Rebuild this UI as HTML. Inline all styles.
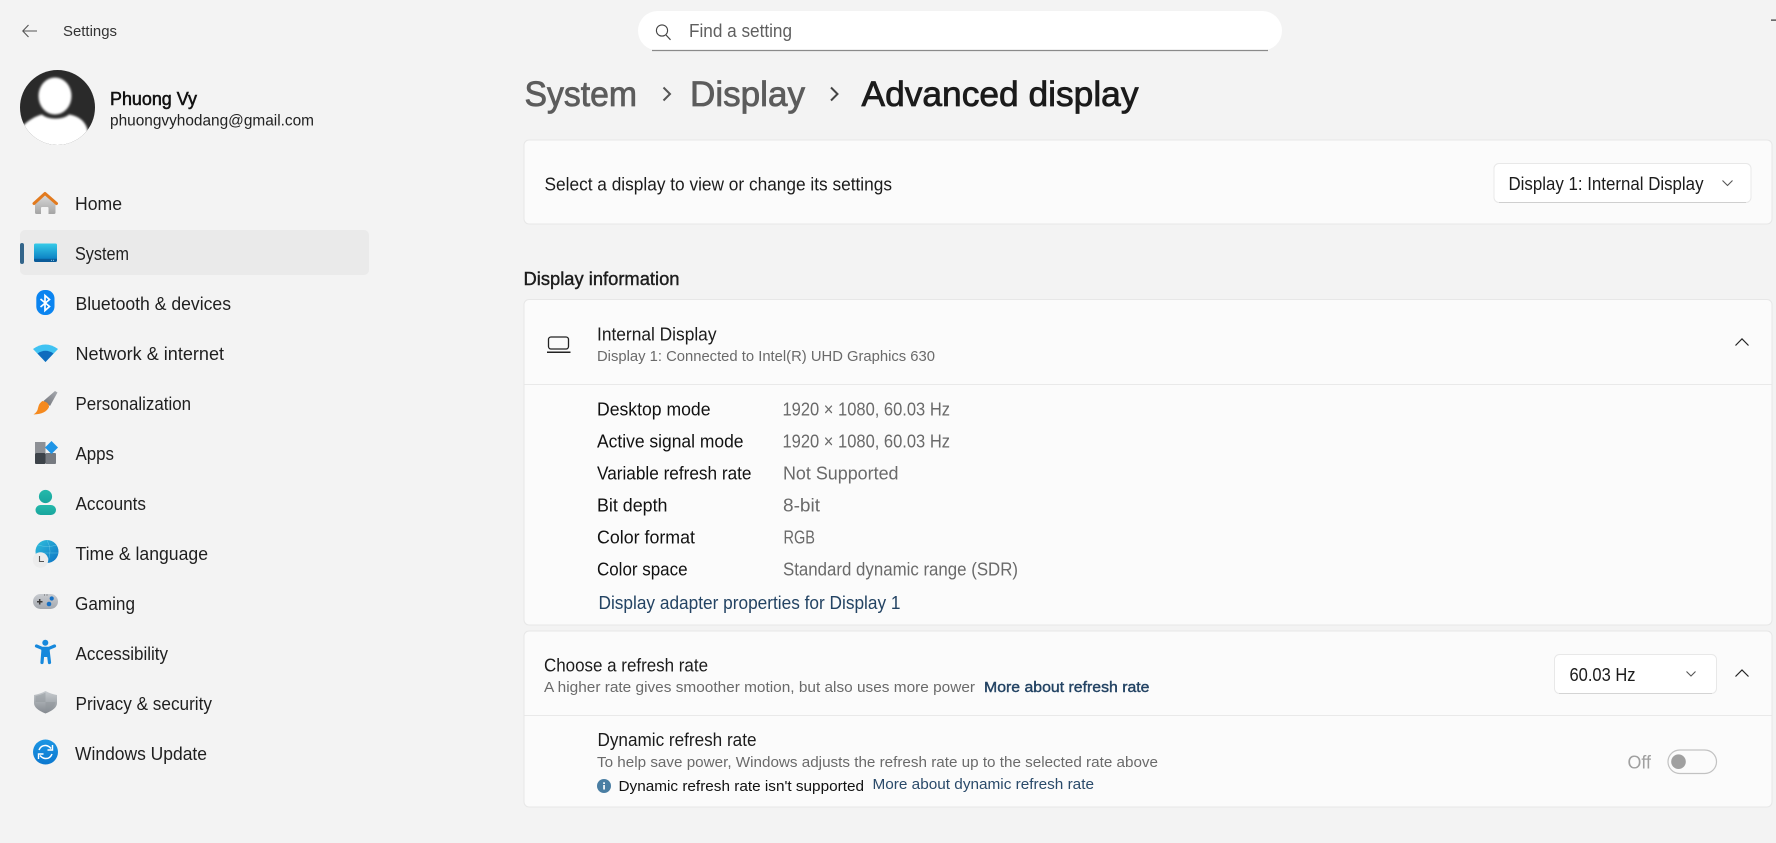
<!DOCTYPE html>
<html lang="en"><head><meta charset="utf-8"><title>Settings</title>
<style>
html,body{margin:0;padding:0;background:#f3f3f3;width:1776px;height:843px;overflow:hidden}
svg{display:block}
text{font-family:"Liberation Sans",sans-serif;fill:#1c1c1c;font-size:18px}
.g{fill:#6a6a6a}
.sb{stroke:currentColor;stroke-width:.4px}
.bc{stroke:currentColor;stroke-width:.8px;font-size:35.5px}
.l{fill:#234363}
.n{font-size:18px;fill:#1f1f1f}
.m{font-size:18px}
.s{font-size:15px}
</style></head><body>
<svg xmlns="http://www.w3.org/2000/svg" width="1776" height="843" viewBox="0 0 1776 843">
<defs>
<linearGradient id="sys" x1="0" y1="0" x2="0" y2="1"><stop offset="0" stop-color="#36cbe8"/><stop offset=".82" stop-color="#0d83c4"/><stop offset=".83" stop-color="#0a5f9c"/><stop offset="1" stop-color="#0a5a98"/></linearGradient>
<linearGradient id="house" x1="0" y1="0" x2="0" y2="1"><stop offset="0" stop-color="#dcdcdc"/><stop offset="1" stop-color="#a4a4a4"/></linearGradient>
<linearGradient id="shield" x1="0" y1="0" x2="0" y2="1"><stop offset="0" stop-color="#c8ccd0"/><stop offset="1" stop-color="#84898f"/></linearGradient>
<linearGradient id="upd" x1="0" y1="0" x2="0" y2="1"><stop offset="0" stop-color="#1c96e4"/><stop offset="1" stop-color="#0c78cf"/></linearGradient>
<linearGradient id="pad" x1="0" y1="0" x2="0" y2="1"><stop offset="0" stop-color="#c8cbd0"/><stop offset="1" stop-color="#a4a8ae"/></linearGradient>
<linearGradient id="teal" x1="0" y1="0" x2="0" y2="1"><stop offset="0" stop-color="#25b9ab"/><stop offset="1" stop-color="#18a59d"/></linearGradient>
<linearGradient id="globe" x1="0" y1="0" x2="1" y2="1"><stop offset="0" stop-color="#30c0dc"/><stop offset="1" stop-color="#0c72c4"/></linearGradient>
<linearGradient id="brush" x1="1" y1="0" x2="0" y2="1"><stop offset="0" stop-color="#a8abb0"/><stop offset="1" stop-color="#6f7278"/></linearGradient>
<clipPath id="av"><circle cx="57.5" cy="107.5" r="37.5"/></clipPath>
<filter id="bl"><feGaussianBlur stdDeviation="1.1"/></filter>
</defs>

<rect width="1776" height="843" fill="#f3f3f3"/>

<!-- title bar -->
<path d="M23 31H37M28.5 25 22.8 31l5.7 6" fill="none" stroke="#555" stroke-width="1.1"/>
<text x="63" y="36" textLength="54" lengthAdjust="spacingAndGlyphs" style="font-size:15px;fill:#333">Settings</text>
<rect x="1771" y="19.5" width="5" height="1.2" fill="#333"/>

<!-- search -->
<rect x="638" y="11" width="644" height="39.5" rx="19.7" fill="#fff"/>
<path d="M652 50.5H1268" stroke="#8a8a8a" stroke-width="1.2"/>
<circle cx="662" cy="30.5" r="5.6" fill="none" stroke="#444" stroke-width="1.1"/>
<path d="M666 35 670.5 39.8" stroke="#444" stroke-width="1.2"/>
<text x="689" y="37" textLength="103" lengthAdjust="spacingAndGlyphs" style="font-size:18px;fill:#5f5f5f">Find a setting</text>

<!-- profile -->
<circle cx="57.5" cy="107.5" r="37.5" fill="#2a2a2a"/>
<g clip-path="url(#av)"><g filter="url(#bl)" fill="#fff">
<ellipse cx="55" cy="96" rx="16.5" ry="18.5"/>
<path d="M22 150V127C28 120 36 116 42 114.500C48 120 63 120 69 114.500C78 116 84 120 87 128L92 150Z"/>
</g></g>
<text x="110" y="105" textLength="87" lengthAdjust="spacingAndGlyphs" class="sb" style="font-size:18px;fill:#111;color:#111;stroke-width:.55px">Phuong Vy</text>
<text x="110" y="125.500" textLength="204" lengthAdjust="spacingAndGlyphs" style="font-size:15.5px;fill:#222">phuongvyhodang@gmail.com</text>

<!-- nav selection -->
<rect x="20" y="230" width="349" height="45" rx="5" fill="#eaeaea"/>
<rect x="20" y="243" width="4" height="21" rx="2" fill="#33658a"/>

<!-- nav text -->
<text class="n" x="75" y="210" textLength="47" lengthAdjust="spacingAndGlyphs">Home</text>
<text class="n" x="75" y="260" textLength="54" lengthAdjust="spacingAndGlyphs">System</text>
<text class="n" x="75.500" y="310" textLength="155.500" lengthAdjust="spacingAndGlyphs">Bluetooth &amp; devices</text>
<text class="n" x="75.500" y="360" textLength="148.500" lengthAdjust="spacingAndGlyphs">Network &amp; internet</text>
<text class="n" x="75.500" y="410" textLength="115.500" lengthAdjust="spacingAndGlyphs">Personalization</text>
<text class="n" x="75.500" y="460" textLength="38.500" lengthAdjust="spacingAndGlyphs">Apps</text>
<text class="n" x="75.500" y="510" textLength="70.500" lengthAdjust="spacingAndGlyphs">Accounts</text>
<text class="n" x="75.500" y="560" textLength="132.500" lengthAdjust="spacingAndGlyphs">Time &amp; language</text>
<text class="n" x="75" y="610" textLength="60" lengthAdjust="spacingAndGlyphs">Gaming</text>
<text class="n" x="75.500" y="660" textLength="92.500" lengthAdjust="spacingAndGlyphs">Accessibility</text>
<text class="n" x="75.500" y="710" textLength="136.500" lengthAdjust="spacingAndGlyphs">Privacy &amp; security</text>
<text class="n" x="75" y="760" textLength="132" lengthAdjust="spacingAndGlyphs">Windows Update</text>

<!-- nav icons -->
<!-- home -->
<path d="M35 203 45 194 55.500 203V212.500a1.500 1.500 0 0 1-1.500 1.500H48.500V208a1 1 0 0 0-1-1H42a1 1 0 0 0-1 1V214H36.500a1.500 1.500 0 0 1-1.500-1.500Z" fill="url(#house)"/>
<path d="M34 203.500 45 193.500 56.500 203.500" fill="none" stroke="#e27a1e" stroke-width="3" stroke-linejoin="round" stroke-linecap="round"/>
<!-- system -->
<rect x="34" y="243.500" width="23" height="18.500" rx="1.500" fill="url(#sys)"/>
<path d="M51 260.300h1M53 260.300h1" stroke="#9fd6ef" stroke-width=".8"/>
<!-- bluetooth -->
<rect x="36.3" y="290" width="18.2" height="25" rx="8.5" fill="#0a84f0"/>
<path d="M40.500 299 49.500 306.500 45 310.500V295.500L49.500 299.500 40.500 307" fill="none" stroke="#fff" stroke-width="1.7"/>
<!-- wifi -->
<path d="M33 349Q45.500 340 58 349L45.500 362Z" fill="#3fc2f2"/>
<path d="M37.500 353.500Q45.500 348 53.500 353.500L45.500 362Z" fill="#0f6cbd"/>
<!-- brush -->
<path d="M43.500 401 55 391 57.500 392.500 50 406Z" fill="url(#brush)"/>
<path d="M42.500 401Q49 402 49 407 46 414 33.500 414.500 37.500 412 38 408 39 403 42.500 401Z" fill="#f58a1f"/>
<!-- apps -->
<rect x="35" y="442" width="10.5" height="11" fill="#8d9095"/>
<rect x="35" y="453" width="10.5" height="11" rx="1" fill="#3d4349"/>
<rect x="45.5" y="453" width="10.5" height="11" rx="1" fill="#767a80"/>
<path d="M51.500 441 58 447.500 51.500 454 45 447.500Z" fill="#1f95e6"/>
<!-- accounts -->
<circle cx="45.500" cy="496.500" r="6.600" fill="url(#teal)"/>
<rect x="35.500" y="505" width="20.500" height="10" rx="5" ry="5" fill="url(#teal)"/>
<!-- time -->
<circle cx="47" cy="551.500" r="11.500" fill="url(#globe)"/>
<path d="M38 545Q47 548 57 545M47 540Q53 551 47 563M36 553H58" fill="none" stroke="#8adcec" stroke-width=".5" opacity=".6"/>
<circle cx="40.500" cy="560" r="7.700" fill="#ececec"/>
<path d="M39.500 556V561.500H44" fill="none" stroke="#555" stroke-width="1.100"/>
<!-- gaming -->
<rect x="33" y="594" width="25" height="15" rx="7.500" fill="url(#pad)"/>
<path d="M39.700 599v5.500M37 601.700h5.500" stroke="#3a3a3a" stroke-width="1.500"/>
<circle cx="51.700" cy="598.500" r="2.100" fill="#1670c4"/><circle cx="49" cy="604" r="2.300" fill="#1670c4"/>
<path d="M44 595h1M46.500 595h1" stroke="#444" stroke-width=".8"/>
<!-- accessibility -->
<circle cx="45.300" cy="642.800" r="3" fill="#1688dc"/>
<path d="M36.500 646 42 648.300H49L54.500 646M43 650 42 662.500M48 650 49.500 662.500" fill="none" stroke="#1688dc" stroke-width="3.200" stroke-linecap="round" stroke-linejoin="round"/>
<path d="M41 648H50L48.500 657H42.500Z" fill="#1688dc"/>
<!-- shield -->
<path d="M45.500 691Q51 694 57 695V703Q57 709 45.500 713.500 34 709 34 703V695Q40 694 45.500 691Z" fill="url(#shield)"/>
<path d="M45.500 692.500V702H35.500V696Q41 695 45.500 692.500ZM45.500 702H55.500Q55 707 45.500 711.500Z" fill="#8f9499" opacity=".45"/>
<!-- update -->
<circle cx="45.500" cy="752" r="12.500" fill="url(#upd)"/>
<path d="M39 750Q41 745 46 745.500 49 746 51 748.500M52 754Q50 759 45 758.500 42 758 40 755.500" fill="none" stroke="#fff" stroke-width="1.500"/>
<path d="M52.500 745V750H47.500M38.500 759V754H43.500" fill="none" stroke="#fff" stroke-width="1.400"/>

<!-- breadcrumb -->
<text class="bc" x="524.500" y="106" textLength="112.500" lengthAdjust="spacingAndGlyphs" style="fill:#5c5c5c;color:#5c5c5c">System</text>
<text class="bc" x="690" y="106" textLength="115" lengthAdjust="spacingAndGlyphs" style="fill:#5c5c5c;color:#5c5c5c">Display</text>
<text class="bc" x="861.500" y="106" textLength="277" lengthAdjust="spacingAndGlyphs" style="fill:#1b1b1b;color:#1b1b1b">Advanced display</text>
<path d="M663.500 87.500 670 94 663.500 100.500" fill="none" stroke="#555" stroke-width="2"/>
<path d="M831 87.500 837.500 94 831 100.500" fill="none" stroke="#444" stroke-width="2"/>

<!-- card 1 -->
<rect x="524" y="140" width="1248" height="84" rx="5" fill="#fbfbfb" stroke="#e7e7e7"/>
<text class="m" x="544.500" y="190.500" textLength="347.500" lengthAdjust="spacingAndGlyphs">Select a display to view or change its settings</text>
<rect x="1494" y="163.500" width="257" height="39" rx="5" fill="#fff" stroke="#e8e8e8"/>
<path d="M1499 202.500H1746" stroke="#cfcfcf"/>
<text class="m" x="1508.500" y="190" textLength="195" lengthAdjust="spacingAndGlyphs">Display 1: Internal Display</text>
<path d="M1722.500 180.500 1727.500 185.500 1732.500 180.500" fill="none" stroke="#555" stroke-width="1.100"/>

<!-- section title -->
<text x="523.500" y="285" textLength="156" lengthAdjust="spacingAndGlyphs" class="sb" style="font-size:18px;color:#1c1c1c">Display information</text>

<!-- card 2 -->
<rect x="524" y="299.500" width="1248" height="325.500" rx="5" fill="#fbfbfb" stroke="#e7e7e7"/>
<path d="M524.500 384.500H1771.500" stroke="#e9e9e9"/>
<rect x="548.500" y="337" width="20" height="12" rx="2.500" fill="none" stroke="#222" stroke-width="1.300"/>
<path d="M547 352.300H570.500" stroke="#222" stroke-width="1.500"/>
<text class="m" x="597" y="340.500" textLength="119.500" lengthAdjust="spacingAndGlyphs">Internal Display</text>
<text class="g s" x="597" y="361" textLength="338" lengthAdjust="spacingAndGlyphs">Display 1: Connected to Intel(R) UHD Graphics 630</text>
<path d="M1735.500 345.500 1742 338.800 1748.500 345.500" fill="none" stroke="#222" stroke-width="1.200"/>

<g>
<text class="m" x="597" y="415.500" textLength="113.500" lengthAdjust="spacingAndGlyphs" style="fill:#111">Desktop mode</text>
<text class="m" x="597" y="447.500" textLength="146.500" lengthAdjust="spacingAndGlyphs" style="fill:#111">Active signal mode</text>
<text class="m" x="597" y="479.500" textLength="154.500" lengthAdjust="spacingAndGlyphs" style="fill:#111">Variable refresh rate</text>
<text class="m" x="597" y="511.500" textLength="70.500" lengthAdjust="spacingAndGlyphs" style="fill:#111">Bit depth</text>
<text class="m" x="597" y="543.500" textLength="98" lengthAdjust="spacingAndGlyphs" style="fill:#111">Color format</text>
<text class="m" x="597" y="575.500" textLength="90.500" lengthAdjust="spacingAndGlyphs" style="fill:#111">Color space</text>
</g>
<g>
<text class="g m" x="782.500" y="415.500" textLength="167.500" lengthAdjust="spacingAndGlyphs">1920 × 1080, 60.03 Hz</text>
<text class="g m" x="782.500" y="447.500" textLength="167.500" lengthAdjust="spacingAndGlyphs">1920 × 1080, 60.03 Hz</text>
<text class="g m" x="783" y="479.500" textLength="115.500" lengthAdjust="spacingAndGlyphs">Not Supported</text>
<text class="g m" x="783" y="511.500" textLength="37" lengthAdjust="spacingAndGlyphs">8-bit</text>
<text class="g m" x="783.500" y="543.500" textLength="31.500" lengthAdjust="spacingAndGlyphs">RGB</text>
<text class="g m" x="783" y="575.500" textLength="235" lengthAdjust="spacingAndGlyphs">Standard dynamic range (SDR)</text>
</g>
<text class="l m" x="598.500" y="609" textLength="302" lengthAdjust="spacingAndGlyphs">Display adapter properties for Display 1</text>

<!-- card 3 -->
<rect x="524" y="631" width="1248" height="176" rx="5" fill="#fbfbfb" stroke="#e7e7e7"/>
<path d="M524.500 715.500H1771.500" stroke="#e9e9e9"/>
<text class="m" x="544" y="671.500" textLength="164" lengthAdjust="spacingAndGlyphs">Choose a refresh rate</text>
<text class="g s" x="544" y="692" textLength="431" lengthAdjust="spacingAndGlyphs">A higher rate gives smoother motion, but also uses more power</text>
<text x="984" y="692" textLength="165.500" lengthAdjust="spacingAndGlyphs" class="sb s" style="fill:#234363;color:#234363">More about refresh rate</text>
<rect x="1554.500" y="654.500" width="162" height="39" rx="5" fill="#fff" stroke="#e8e8e8"/>
<path d="M1559 693.500H1712" stroke="#d4d4d4"/>
<text class="m" x="1569.500" y="681" textLength="66" lengthAdjust="spacingAndGlyphs">60.03 Hz</text>
<path d="M1686.500 671.500 1691 676 1695.500 671.500" fill="none" stroke="#555" stroke-width="1.100"/>
<path d="M1735.500 676.500 1742 670 1748.500 676.500" fill="none" stroke="#222" stroke-width="1.200"/>

<text class="m" x="597.500" y="746" textLength="159" lengthAdjust="spacingAndGlyphs">Dynamic refresh rate</text>
<text class="g s" x="597" y="767" textLength="561" lengthAdjust="spacingAndGlyphs">To help save power, Windows adjusts the refresh rate up to the selected rate above</text>
<circle cx="604" cy="786" r="7" fill="#4a7ea3"/>
<rect x="603.200" y="785" width="1.700" height="4.500" fill="#fff"/><rect x="603.200" y="782.300" width="1.700" height="1.700" fill="#fff"/>
<text class="s" x="618.500" y="791" textLength="245.500" lengthAdjust="spacingAndGlyphs" style="fill:#111">Dynamic refresh rate isn't supported</text>
<text class="s" x="872.500" y="789" textLength="221.500" lengthAdjust="spacingAndGlyphs" style="fill:#2a4a6a">More about dynamic refresh rate</text>
<text class="m" x="1627.500" y="768.500" textLength="23.500" lengthAdjust="spacingAndGlyphs" style="fill:#a0a0a0">Off</text>
<rect x="1668" y="750" width="48.500" height="23.500" rx="11.750" fill="#fbfbfb" stroke="#c2c2c2" stroke-width="1.200"/>
<circle cx="1678.500" cy="761.700" r="7.300" fill="#a0a0a0"/>
</svg>
</body></html>
